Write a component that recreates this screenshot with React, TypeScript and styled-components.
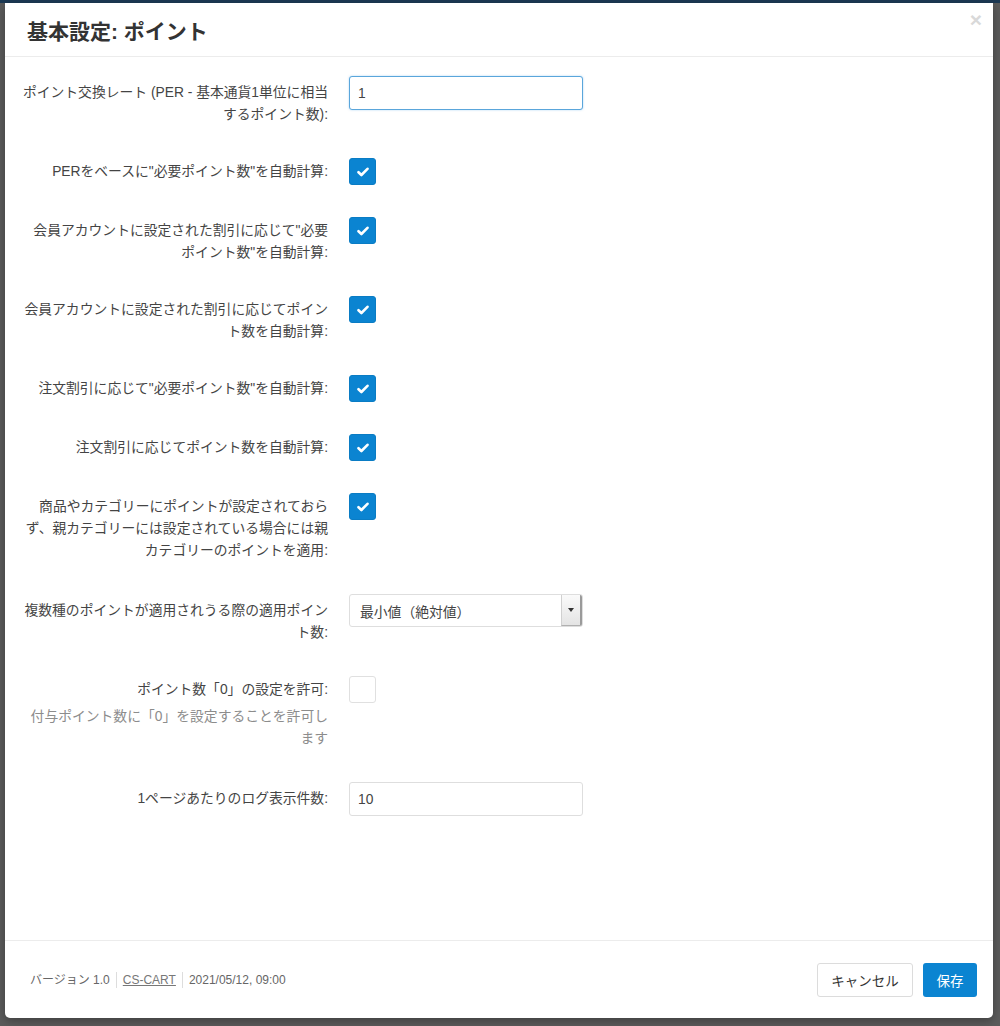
import React from 'react';
import styled, {createGlobalStyle} from 'styled-components';

const GlobalStyle = createGlobalStyle`
  html, body {
    margin: 0;
    padding: 0;
  }
  body {
    background: #5b5b5b;
    font-family: "Liberation Sans", "Noto Sans CJK JP", sans-serif;
  }
`;

interface RowProps {
  lines: string[];
  help?: string[];
  pad?: number;
  children: React.ReactNode;
}

function FieldRow(props: RowProps) {
  const {lines, help, pad = 3, children} = props;
  return (
    <Row>
      <LabelCell $pad={pad}>
        {lines.map((line) => (
          <Line key={line}>{line}</Line>
        ))}
        {help && (
          <Help>
            {help.map((line) => (
              <Line key={line}>{line}</Line>
            ))}
          </Help>
        )}
      </LabelCell>
      <div>{children}</div>
    </Row>
  );
}

function Checkbox({checked}: {checked: boolean}) {
  return (
    <CheckBox $checked={checked}>
      {checked && (
        <svg width="12" height="10" viewBox="0 0 12 10">
          <path d="M1.5 5.2 L4.4 8 L10.5 1.8" fill="none" stroke="#fff" strokeWidth="2.6" strokeLinecap="round" strokeLinejoin="round" />
        </svg>
      )}
    </CheckBox>
  );
}

export default function App() {
  return (
    <>
      <GlobalStyle />
      <Backdrop>
        <Modal>
          <Header>
            <Title>基本設定: ポイント</Title>
            <Close>×</Close>
          </Header>
          <Body>
            <FieldRow lines={['ポイント交換レート (PER - 基本通貨1単位に相当', 'するポイント数):']} pad={6}>
              <TextInput $focused readOnly value="1" />
            </FieldRow>
            <FieldRow lines={['PERをベースに"必要ポイント数"を自動計算:']}>
              <Checkbox checked />
            </FieldRow>
            <FieldRow lines={['会員アカウントに設定された割引に応じて"必要', 'ポイント数"を自動計算:']}>
              <Checkbox checked />
            </FieldRow>
            <FieldRow lines={['会員アカウントに設定された割引に応じてポイン', 'ト数を自動計算:']}>
              <Checkbox checked />
            </FieldRow>
            <FieldRow lines={['注文割引に応じて"必要ポイント数"を自動計算:']}>
              <Checkbox checked />
            </FieldRow>
            <FieldRow lines={['注文割引に応じてポイント数を自動計算:']}>
              <Checkbox checked />
            </FieldRow>
            <FieldRow
              lines={[
                '商品やカテゴリーにポイントが設定されておら',
                'ず、親カテゴリーには設定されている場合には親',
                'カテゴリーのポイントを適用:',
              ]}
            >
              <Checkbox checked />
            </FieldRow>
            <FieldRow lines={['複数種のポイントが適用されうる際の適用ポイン', 'ト数:']} pad={6}>
              <SelectBox>
                <SelectText>最小値（絶対値）</SelectText>
                <SelectArrow>
                  <Caret />
                </SelectArrow>
              </SelectBox>
            </FieldRow>
            <FieldRow
              lines={['ポイント数「0」の設定を許可:']}
              help={['付与ポイント数に「0」を設定することを許可し', 'ます']}
            >
              <Checkbox checked={false} />
            </FieldRow>
            <FieldRow lines={['1ページあたりのログ表示件数:']} pad={6}>
              <TextInput readOnly value="10" />
            </FieldRow>
          </Body>
          <Footer>
            <Meta>
              <MetaItem>バージョン 1.0</MetaItem>
              <MetaLink>CS-CART</MetaLink>
              <MetaItem>2021/05/12, 09:00</MetaItem>
            </Meta>
            <Buttons>
              <CancelButton>キャンセル</CancelButton>
              <SaveButton>保存</SaveButton>
            </Buttons>
          </Footer>
        </Modal>
      </Backdrop>
    </>
  );
}

const Backdrop = styled.div`
  box-sizing: border-box;
  height: 1026px;
  border-top: 3px solid #1c3954;
  padding: 0 7px 8px 5px;
  display: flex;
`;

const Modal = styled.div`
  flex: 1;
  display: flex;
  flex-direction: column;
  background: #fff;
  border-radius: 0 0 5px 5px;
  box-shadow: 0 3px 10px rgba(0, 0, 0, 0.3);
`;

const Header = styled.div`
  position: relative;
  height: 53px;
  display: flex;
  align-items: center;
  padding: 0 22px;
  border-bottom: 1px solid #ececec;
`;

const Title = styled.h3`
  margin: 0;
  font-size: 21px;
  font-weight: bold;
  color: #333;
`;

const Close = styled.span`
  position: absolute;
  top: 5px;
  right: 11px;
  font-size: 21px;
  font-weight: bold;
  color: #d9d9d9;
`;

const Body = styled.div`
  flex: 1;
  padding-top: 19px;
`;

const Row = styled.div`
  display: grid;
  grid-template-columns: 323px 234px;
  column-gap: 21px;
  margin-bottom: 32px;
`;

const LabelCell = styled.div<{$pad: number}>`
  padding-top: ${(p) => p.$pad}px;
  text-align: right;
  font-size: 13.8px;
  line-height: 22px;
  color: #444;
  white-space: nowrap;
`;

const Line = styled.span`
  display: block;
`;

const Help = styled.div`
  margin-top: 5px;
  color: #8c8c8c;
`;

const CheckBox = styled.div<{$checked: boolean}>`
  box-sizing: border-box;
  width: 27px;
  height: 27px;
  border-radius: 3px;
  display: flex;
  align-items: center;
  justify-content: center;
  background: ${(p) => (p.$checked ? '#0b84d1' : '#fff')};
  border: 1px solid ${(p) => (p.$checked ? '#0a7cc4' : '#e0e0e0')};
`;

const TextInput = styled.input<{$focused?: boolean}>`
  box-sizing: border-box;
  width: 234px;
  height: 34px;
  padding: 0 8px;
  border: 1px solid ${(p) => (p.$focused ? '#5aa6db' : '#dedede')};
  border-radius: 3px;
  box-shadow: ${(p) => (p.$focused ? '0 0 2px rgba(82, 168, 236, 0.5)' : 'none')};
  font-family: "Liberation Sans", "Noto Sans CJK JP", sans-serif;
  font-size: 13.8px;
  color: #444;
  outline: none;
`;

const SelectBox = styled.div`
  box-sizing: border-box;
  width: 234px;
  height: 33px;
  display: flex;
  border: 1px solid #dedede;
  border-radius: 3px;
  overflow: hidden;
`;

const SelectText = styled.span`
  flex: 1;
  display: flex;
  align-items: center;
  padding-left: 10px;
  font-size: 13.8px;
  color: #444;
`;

const SelectArrow = styled.span`
  width: 18px;
  display: flex;
  align-items: center;
  justify-content: center;
  background: linear-gradient(#fafafa, #e4e4e4);
  border-left: 1px solid #d0d0d0;
  border-right: 2px solid #9a9a9a;
  border-bottom: 1px solid #b0b0b0;
`;

const Caret = styled.span`
  width: 0;
  height: 0;
  border-left: 3px solid transparent;
  border-right: 3px solid transparent;
  border-top: 4px solid #333;
`;

const Footer = styled.div`
  height: 77px;
  display: flex;
  align-items: center;
  justify-content: space-between;
  padding: 0 16px 0 25px;
  border-top: 1px solid #ececec;
`;

const Meta = styled.div`
  display: flex;
  align-items: center;
  font-size: 12px;
  color: #666;
`;

const MetaItem = styled.span`
  padding: 0 6px;
  border-left: 1px solid #ddd;
  line-height: 16px;
  &:first-child {
    padding-left: 0;
    border-left: none;
  }
`;

const MetaLink = styled.a`
  padding: 0 6px;
  border-left: 1px solid #ddd;
  line-height: 16px;
  color: #777;
  text-decoration: underline;
`;

const Buttons = styled.div`
  display: flex;
  gap: 10px;
`;

const CancelButton = styled.button`
  box-sizing: border-box;
  height: 34px;
  width: 96px;
  border: 1px solid #dcdcdc;
  border-radius: 3px;
  background: #fff;
  font-family: "Liberation Sans", "Noto Sans CJK JP", sans-serif;
  font-size: 13.5px;
  color: #333;
`;

const SaveButton = styled.button`
  box-sizing: border-box;
  height: 34px;
  width: 54px;
  border: none;
  border-radius: 3px;
  background: #0b84d1;
  font-family: "Liberation Sans", "Noto Sans CJK JP", sans-serif;
  font-size: 13.5px;
  color: #fff;
`;
